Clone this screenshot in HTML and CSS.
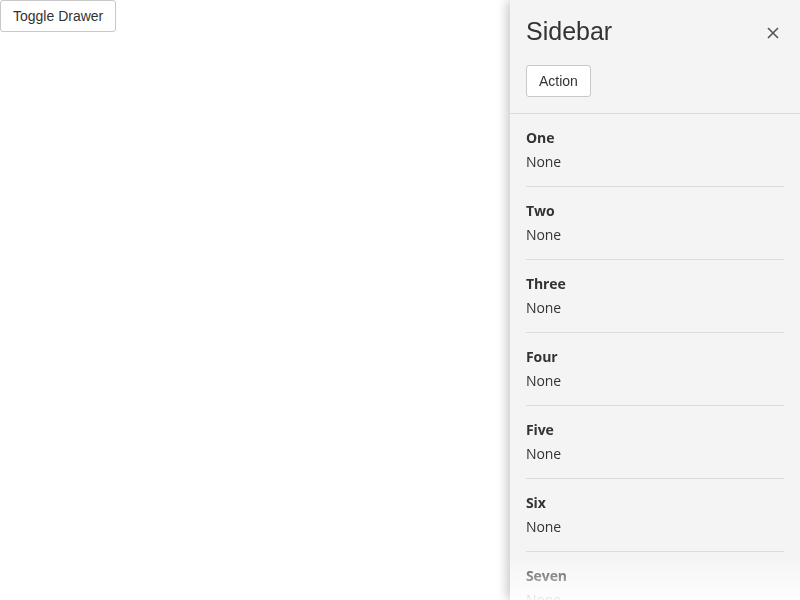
FILE: index.html
```html
<!DOCTYPE html>
<html>
<head>
<meta charset="utf-8">
<link rel="stylesheet" href="styles.css">
</head>
<body>
<button class="btn">Toggle Drawer</button>
<aside class="drawer">
  <div class="drawer-header">
    <div class="title-row">
      <h1 class="title">Sidebar</h1>
      <button class="close" aria-label="Close">
        <svg width="12" height="12" viewBox="0 0 12 12"><path d="M1 1L11 11M11 1L1 11" stroke="#555" stroke-width="1.6" fill="none"/></svg>
      </button>
    </div>
    <button class="btn">Action</button>
  </div>
  <div class="list">
    <div class="item"><div class="label">One</div><div class="value">None</div></div>
    <div class="item"><div class="label">Two</div><div class="value">None</div></div>
    <div class="item"><div class="label">Three</div><div class="value">None</div></div>
    <div class="item"><div class="label">Four</div><div class="value">None</div></div>
    <div class="item"><div class="label">Five</div><div class="value">None</div></div>
    <div class="item"><div class="label">Six</div><div class="value">None</div></div>
    <div class="item"><div class="label">Seven</div><div class="value">None</div></div>
    <div class="item"><div class="label">Eight</div><div class="value">None</div></div>
  </div>
  <div class="fade"></div>
</aside>
</body>
</html>
```
FILE: styles.css
```css
html, body {
  margin: 0;
  padding: 0;
  height: 100%;
  overflow: hidden;
  background: #fff;
  font-family: "Liberation Sans", Arial, sans-serif;
  color: #333;
}
.btn {
  display: inline-block;
  height: 32px;
  padding: 0 12px;
  font-family: "Liberation Sans", Arial, sans-serif;
  font-size: 14px;
  color: #333;
  background: #fff;
  border: 1px solid #c8c8c8;
  border-radius: 3px;
  cursor: pointer;
}
.drawer {
  position: fixed;
  top: 0;
  right: 0;
  width: 290px;
  height: 100%;
  background: #f4f4f4;
  box-shadow: -3px 0 10px rgba(0, 0, 0, 0.22);
  overflow: hidden;
}
.drawer-header {
  padding: 16px 16px 16px;
  border-bottom: 1px solid #dcdcdc;
}
.title-row {
  display: flex;
  align-items: center;
  justify-content: space-between;
  margin-bottom: 19px;
}
.title {
  margin: 0;
  font-size: 25px;
  font-weight: normal;
  line-height: 30px;
  color: #333;
}
.close {
  width: 24px;
  height: 24px;
  margin-right: -1px;
  margin-top: 3px;
  padding: 0;
  border: 0;
  background: transparent;
  display: flex;
  align-items: center;
  justify-content: center;
}
.list {
  padding: 0 16px;
}
.item {
  padding: 14px 0;
  border-bottom: 1px solid #dcdcdc;
  display: flex;
  flex-direction: column;
  gap: 4px;
}
.label {
  font-family: "Open Sans", sans-serif;
  font-weight: bold;
  font-size: 14px;
  line-height: 20px;
  letter-spacing: -0.1px;
  color: #333;
}
.value {
  font-family: "Open Sans", sans-serif;
  font-size: 14px;
  line-height: 20px;
  letter-spacing: -0.1px;
  color: #333;
}
.fade {
  position: absolute;
  left: 0;
  right: 0;
  bottom: 0;
  height: 44px;
  background: linear-gradient(to bottom, rgba(255, 255, 255, 0), rgba(255, 255, 255, 0.92));
}
```
